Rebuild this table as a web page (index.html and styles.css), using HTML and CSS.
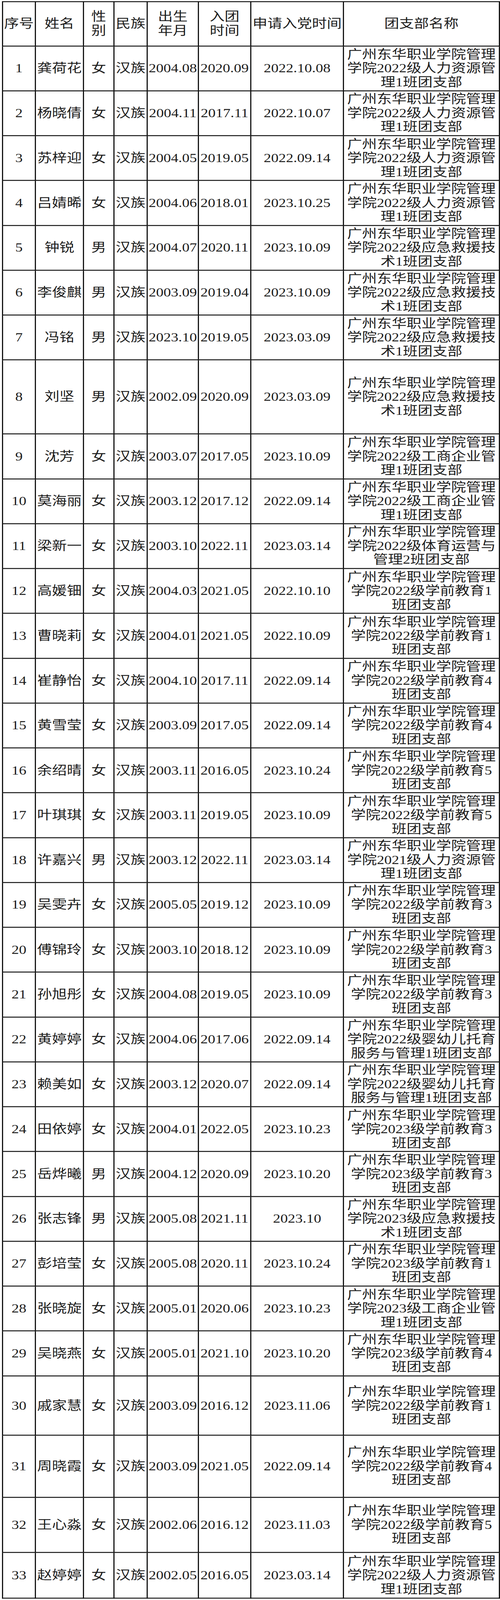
FILE: index.html
```html
<!DOCTYPE html>
<html lang="zh-CN">
<head>
<meta charset="utf-8">
<title>入党申请人名单</title>
<link rel="stylesheet" href="styles.css">
</head>
<body>
<table class="roster">
  <colgroup>
    <col class="c-no"><col class="c-name"><col class="c-sex"><col class="c-eth"><col class="c-birth"><col class="c-join"><col class="c-apply"><col class="c-branch">
  </colgroup>
  <thead>
    <tr class="head">
      <th>序号</th><th>姓名</th><th>性<br>别</th><th>民族</th><th>出生<br>年月</th><th>入团<br>时间</th><th>申请入党时间</th><th>团支部名称</th>
    </tr>
  </thead>
  <tbody>
    <tr><td>1</td><td>龚荷花</td><td>女</td><td>汉族</td><td>2004.08</td><td>2020.09</td><td>2022.10.08</td><td class="branch">广州东华职业学院管理<br>学院2022级人力资源管<br>理1班团支部</td></tr>
    <tr><td>2</td><td>杨晓倩</td><td>女</td><td>汉族</td><td>2004.11</td><td>2017.11</td><td>2022.10.07</td><td class="branch">广州东华职业学院管理<br>学院2022级人力资源管<br>理1班团支部</td></tr>
    <tr><td>3</td><td>苏梓迎</td><td>女</td><td>汉族</td><td>2004.05</td><td>2019.05</td><td>2022.09.14</td><td class="branch">广州东华职业学院管理<br>学院2022级人力资源管<br>理1班团支部</td></tr>
    <tr><td>4</td><td>吕婧晞</td><td>女</td><td>汉族</td><td>2004.06</td><td>2018.01</td><td>2023.10.25</td><td class="branch">广州东华职业学院管理<br>学院2022级人力资源管<br>理1班团支部</td></tr>
    <tr><td>5</td><td>钟锐</td><td>男</td><td>汉族</td><td>2004.07</td><td>2020.11</td><td>2023.10.09</td><td class="branch">广州东华职业学院管理<br>学院2022级应急救援技<br>术1班团支部</td></tr>
    <tr><td>6</td><td>李俊麒</td><td>男</td><td>汉族</td><td>2003.09</td><td>2019.04</td><td>2023.10.09</td><td class="branch">广州东华职业学院管理<br>学院2022级应急救援技<br>术1班团支部</td></tr>
    <tr><td>7</td><td>冯铭</td><td>男</td><td>汉族</td><td>2023.10</td><td>2019.05</td><td>2023.03.09</td><td class="branch">广州东华职业学院管理<br>学院2022级应急救援技<br>术1班团支部</td></tr>
    <tr class="h230"><td>8</td><td>刘坚</td><td>男</td><td>汉族</td><td>2002.09</td><td>2020.09</td><td>2023.03.09</td><td class="branch">广州东华职业学院管理<br>学院2022级应急救援技<br>术1班团支部</td></tr>
    <tr><td>9</td><td>沈芳</td><td>女</td><td>汉族</td><td>2003.07</td><td>2017.05</td><td>2023.10.09</td><td class="branch">广州东华职业学院管理<br>学院2022级工商企业管<br>理1班团支部</td></tr>
    <tr><td>10</td><td>莫海丽</td><td>女</td><td>汉族</td><td>2003.12</td><td>2017.12</td><td>2022.09.14</td><td class="branch">广州东华职业学院管理<br>学院2022级工商企业管<br>理1班团支部</td></tr>
    <tr><td>11</td><td>梁新一</td><td>女</td><td>汉族</td><td>2003.10</td><td>2022.11</td><td>2023.03.14</td><td class="branch">广州东华职业学院管理<br>学院2022级体育运营与<br>管理2班团支部</td></tr>
    <tr><td>12</td><td>高媛钿</td><td>女</td><td>汉族</td><td>2004.03</td><td>2021.05</td><td>2022.10.10</td><td class="branch">广州东华职业学院管理<br>学院2022级学前教育1<br>班团支部</td></tr>
    <tr><td>13</td><td>曹晓莉</td><td>女</td><td>汉族</td><td>2004.01</td><td>2021.05</td><td>2022.10.09</td><td class="branch">广州东华职业学院管理<br>学院2022级学前教育1<br>班团支部</td></tr>
    <tr><td>14</td><td>崔静怡</td><td>女</td><td>汉族</td><td>2004.10</td><td>2017.11</td><td>2022.09.14</td><td class="branch">广州东华职业学院管理<br>学院2022级学前教育4<br>班团支部</td></tr>
    <tr><td>15</td><td>黄雪莹</td><td>女</td><td>汉族</td><td>2003.09</td><td>2017.05</td><td>2022.09.14</td><td class="branch">广州东华职业学院管理<br>学院2022级学前教育4<br>班团支部</td></tr>
    <tr><td>16</td><td>余绍晴</td><td>女</td><td>汉族</td><td>2003.11</td><td>2016.05</td><td>2023.10.24</td><td class="branch">广州东华职业学院管理<br>学院2022级学前教育5<br>班团支部</td></tr>
    <tr><td>17</td><td>叶琪琪</td><td>女</td><td>汉族</td><td>2003.11</td><td>2019.05</td><td>2023.10.09</td><td class="branch">广州东华职业学院管理<br>学院2022级学前教育5<br>班团支部</td></tr>
    <tr><td>18</td><td>许嘉兴</td><td>男</td><td>汉族</td><td>2003.12</td><td>2022.11</td><td>2023.03.14</td><td class="branch">广州东华职业学院管理<br>学院2021级人力资源管<br>理1班团支部</td></tr>
    <tr><td>19</td><td>吴雯卉</td><td>女</td><td>汉族</td><td>2005.05</td><td>2019.12</td><td>2023.10.09</td><td class="branch">广州东华职业学院管理<br>学院2022级学前教育3<br>班团支部</td></tr>
    <tr><td>20</td><td>傅锦玲</td><td>女</td><td>汉族</td><td>2003.10</td><td>2018.12</td><td>2023.10.09</td><td class="branch">广州东华职业学院管理<br>学院2022级学前教育3<br>班团支部</td></tr>
    <tr><td>21</td><td>孙旭彤</td><td>女</td><td>汉族</td><td>2004.08</td><td>2019.05</td><td>2023.10.09</td><td class="branch">广州东华职业学院管理<br>学院2022级学前教育3<br>班团支部</td></tr>
    <tr><td>22</td><td>黄婷婷</td><td>女</td><td>汉族</td><td>2004.06</td><td>2017.06</td><td>2022.09.14</td><td class="branch">广州东华职业学院管理<br>学院2022级婴幼儿托育<br>服务与管理1班团支部</td></tr>
    <tr><td>23</td><td>赖美如</td><td>女</td><td>汉族</td><td>2003.12</td><td>2020.07</td><td>2022.09.14</td><td class="branch">广州东华职业学院管理<br>学院2022级婴幼儿托育<br>服务与管理1班团支部</td></tr>
    <tr><td>24</td><td>田依婷</td><td>女</td><td>汉族</td><td>2004.01</td><td>2022.05</td><td>2023.10.23</td><td class="branch">广州东华职业学院管理<br>学院2023级学前教育3<br>班团支部</td></tr>
    <tr><td>25</td><td>岳烨曦</td><td>男</td><td>汉族</td><td>2004.12</td><td>2020.09</td><td>2023.10.20</td><td class="branch">广州东华职业学院管理<br>学院2023级学前教育3<br>班团支部</td></tr>
    <tr><td>26</td><td>张志锋</td><td>男</td><td>汉族</td><td>2005.08</td><td>2021.11</td><td>2023.10</td><td class="branch">广州东华职业学院管理<br>学院2023级应急救援技<br>术1班团支部</td></tr>
    <tr><td>27</td><td>彭培莹</td><td>女</td><td>汉族</td><td>2005.08</td><td>2020.11</td><td>2023.10.24</td><td class="branch">广州东华职业学院管理<br>学院2023级学前教育1<br>班团支部</td></tr>
    <tr><td>28</td><td>张晓旋</td><td>女</td><td>汉族</td><td>2005.01</td><td>2020.06</td><td>2023.10.23</td><td class="branch">广州东华职业学院管理<br>学院2023级工商企业管<br>理1班团支部</td></tr>
    <tr><td>29</td><td>吴晓燕</td><td>女</td><td>汉族</td><td>2005.01</td><td>2021.10</td><td>2023.10.20</td><td class="branch">广州东华职业学院管理<br>学院2023级学前教育4<br>班团支部</td></tr>
    <tr class="h184"><td>30</td><td>戚家慧</td><td>女</td><td>汉族</td><td>2003.09</td><td>2016.12</td><td>2023.11.06</td><td class="branch">广州东华职业学院管理<br>学院2022级学前教育1<br>班团支部</td></tr>
    <tr class="h193"><td>31</td><td>周晓霞</td><td>女</td><td>汉族</td><td>2003.09</td><td>2021.05</td><td>2022.09.14</td><td class="branch">广州东华职业学院管理<br>学院2022级学前教育4<br>班团支部</td></tr>
    <tr class="h171"><td>32</td><td>王心淼</td><td>女</td><td>汉族</td><td>2002.06</td><td>2016.12</td><td>2023.11.03</td><td class="branch">广州东华职业学院管理<br>学院2022级学前教育5<br>班团支部</td></tr>
    <tr class="h142"><td>33</td><td>赵婷婷</td><td>女</td><td>汉族</td><td>2002.05</td><td>2016.05</td><td>2023.03.14</td><td class="branch">广州东华职业学院管理<br>学院2022级人力资源管<br>理1班团支部</td></tr>
  </tbody>
</table>
</body>
</html>
```

FILE: styles.css
```css
html, body {
  margin: 0;
  padding: 0;
  background: #ffffff;
  overflow: hidden;
}

body {
  height: 100vh;
  font-family: "Liberation Serif", "Noto Sans CJK SC", serif;
  color: #1c1c1c;
}

.roster {
  border-collapse: collapse;
  table-layout: fixed;
  width: 1271px;
  margin: 3px 0 0 5px;
  font-size: 38px;
  line-height: 43px;
  transform-origin: 0 0;
}

/* The sheet is 4965px tall; when the window is shorter than that
   (e.g. a browser that caps the window at 4096px), fit it vertically. */
@media (min-height: 3800px) and (max-height: 4900px) {
  .roster {
    transform: scaleY(0.8245);
  }
}

.c-no { width: 84px; }
.c-name { width: 123px; }
.c-sex { width: 78px; }
.c-eth { width: 85px; }
.c-birth { width: 131px; }
.c-join { width: 134px; }
.c-apply { width: 237px; }
.c-branch { width: 399px; }

.roster th,
.roster td {
  border: 3px solid #161616;
  padding: 0;
  text-align: center;
  vertical-align: middle;
  font-weight: normal;
  white-space: nowrap;
  overflow: hidden;
}

.roster tr {
  height: 139.25px;
}

.roster tr.head { height: 137.5px; }
.roster tr.h230 { height: 230px; }
.roster tr.h184 { height: 184px; }
.roster tr.h193 { height: 193px; }
.roster tr.h171 { height: 171px; }
.roster tr.h142 { height: 142px; }
```
